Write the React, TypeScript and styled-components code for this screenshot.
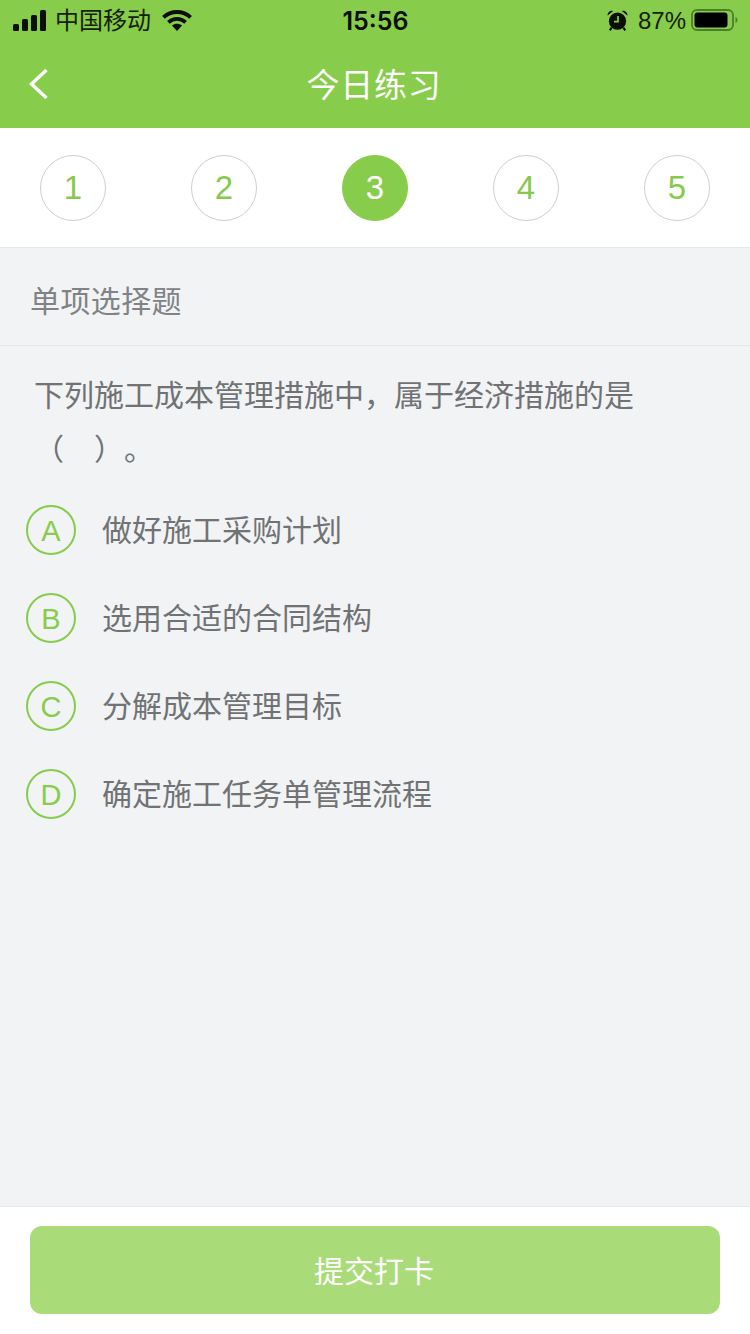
import React from "react";
import styled, { createGlobalStyle } from "styled-components";

const Global = createGlobalStyle`
  html, body { margin: 0; padding: 0; background: #f1f3f5; }
  * { box-sizing: border-box; }
  body { font-family: "Liberation Sans", "Noto Sans CJK SC", sans-serif; text-spacing-trim: space-all; }
`;

const Page = styled.div`
  width: 750px;
  height: 1334px;
  display: flex;
  flex-direction: column;
  background: #f1f3f5;
  overflow: hidden;
`;

const Header = styled.header`
  height: 128px;
  background: #87cc4a;
  display: flex;
  flex-direction: column;
`;

const StatusBar = styled.div`
  height: 40px;
  padding: 0 12px 0 13px;
  display: grid;
  grid-template-columns: 1fr auto 1fr;
  align-items: center;
  color: #0b0f08;
`;

const StatusLeft = styled.div`
  display: flex;
  align-items: center;
`;

const Carrier = styled.span`
  font-size: 24px;
  height: 40px;
  line-height: 42px;
  margin-left: 9px;
  margin-right: 11px;
  color: #16210c;
`;

const Time = styled.span`
  font-family: "Inter", "Liberation Sans", sans-serif;
  font-size: 25px;
  font-weight: 600;
  height: 40px;
  line-height: 42px;
`;

const StatusRight = styled.div`
  display: flex;
  align-items: center;
  justify-content: flex-end;
`;

const Percent = styled.span`
  font-size: 24px;
  height: 40px;
  line-height: 42px;
  margin-left: 10px;
  margin-right: 5px;
  color: #16210c;
`;

const NavBar = styled.div`
  position: relative;
  flex: 1;
  display: flex;
  align-items: center;
  justify-content: center;
  padding-bottom: 3px;
`;

const BackIcon = styled.svg`
  position: absolute;
  left: 28px;
  top: 28px;
`;

const Title = styled.h1`
  margin: 0 2px 0 0;
  font-size: 33px;
  letter-spacing: 0.7px;
  font-weight: 400;
  color: #fff;
`;

const Steps = styled.nav`
  height: 120px;
  background: #fff;
  border-bottom: 1px solid #e6e7e8;
  padding: 27px 40px 0;
  display: flex;
  align-items: flex-start;
  justify-content: space-between;
`;

const Step = styled.div<{ $active?: boolean }>`
  width: 66px;
  height: 66px;
  border-radius: 50%;
  display: flex;
  align-items: center;
  justify-content: center;
  font-size: 33px;
  background: ${(p) => (p.$active ? "#87cc4a" : "#fff")};
  border: 1px solid ${(p) => (p.$active ? "#87cc4a" : "#cfcfcf")};
  color: ${(p) => (p.$active ? "#fff" : "#86c94d")};
`;

const SectionTitle = styled.div`
  height: 98px;
  padding: 5px 0 0 30px;
  border-bottom: 1px solid #e6e7e8;
  display: flex;
  align-items: center;
  font-size: 30px;
  letter-spacing: 0.4px;
  color: #808385;
`;

const Body = styled.main`
  flex: 1;
  min-height: 0;
  display: flex;
  flex-direction: column;
`;

const Question = styled.p`
  margin: 0;
  padding: 23px 0 0 34px;
  max-width: 650px;
  font-size: 30px;
  line-height: 54px;
  color: #707274;
`;

const Options = styled.ul`
  list-style: none;
  margin: 28px 0 0;
  padding: 0 0 0 26px;
  display: flex;
  flex-direction: column;
  gap: 38px;
`;

const Option = styled.li`
  display: flex;
  align-items: center;
  gap: 26px;
  height: 50px;
`;

const Letter = styled.span`
  width: 50px;
  height: 50px;
  border-radius: 50%;
  border: 2px solid #87cc4a;
  padding-top: 2px;
  display: flex;
  align-items: center;
  justify-content: center;
  font-size: 29px;
  color: #87cc4a;
`;

const OptionText = styled.span`
  font-size: 30px;
  padding-bottom: 4px;
  color: #707274;
`;

const Footer = styled.footer`
  height: 128px;
  background: #fff;
  border-top: 1px solid #e6e7ea;
  padding: 19px 30px 20px;
`;

const Submit = styled.button`
  width: 100%;
  height: 88px;
  border: none;
  border-radius: 12px;
  background: #a9dc78;
  color: #fff;
  font-family: inherit;
  font-size: 30px;
  padding: 0 2px 2px 0;
`;

const Svg = styled.svg`
  display: block;
  flex: none;
`;

const Signal = () => (
  <Svg width="33" height="21" viewBox="0 0 33 21" fill="#0b0f08">
    <rect x="0" y="14" width="6" height="7" rx="1.5" />
    <rect x="9" y="9" width="6" height="12" rx="1.5" />
    <rect x="18" y="5" width="6" height="16" rx="1.5" />
    <rect x="27" y="0" width="6" height="21" rx="1.5" />
  </Svg>
);

const Wifi = () => (
  <Svg width="30" height="21" viewBox="0 0 30 21" fill="none" stroke="#0b0f08">
    <path d="M1.4 7.4C9 .2 21 .2 28.6 7.4" strokeWidth="3.8" />
    <path d="M6.4 12.4C11.4 7.6 18.6 7.6 23.6 12.4" strokeWidth="3.8" />
    <path d="M10 15.4 15 21l5-5.6c-2.8-2.2-7.2-2.2-10 0Z" fill="#0b0f08" strokeWidth="0" />
  </Svg>
);

const Alarm = () => (
  <Svg width="21" height="21" viewBox="0 0 21 21">
    <circle cx="10.5" cy="11.2" r="8.6" fill="#0b0f08" />
    <path d="M.6 5.4A4.2 4.2 0 0 1 6.2 1ZM20.4 5.4A4.2 4.2 0 0 0 14.8 1Z" fill="#0b0f08" />
    <path d="M4.6 17.6 2.8 20.4M16.4 17.6 18.2 20.4" stroke="#0b0f08" strokeWidth="2" />
    <path d="M11 6v5.6H7" fill="none" stroke="#87cc4a" strokeWidth="1.7" />
  </Svg>
);

const Battery = () => (
  <Svg width="47" height="22" viewBox="0 0 47 22">
    <rect x="1" y="1" width="41" height="20" rx="5" fill="none" stroke="#4c7f2a" strokeWidth="1.8" />
    <rect x="3.5" y="3.5" width="33" height="15" rx="3" fill="#000" />
    <path d="M44.5 8v6c1.4-.5 2-1.6 2-3s-.6-2.5-2-3Z" fill="#4c7f2a" />
  </Svg>
);

const steps = [1, 2, 3, 4, 5];
const options = [
  ["A", "做好施工采购计划"],
  ["B", "选用合适的合同结构"],
  ["C", "分解成本管理目标"],
  ["D", "确定施工任务单管理流程"],
];

export default function App() {
  return (
    <Page>
      <Global />
      <Header>
        <StatusBar>
          <StatusLeft>
            <Signal />
            <Carrier>中国移动</Carrier>
            <Wifi />
          </StatusLeft>
          <Time>15:56</Time>
          <StatusRight>
            <Alarm />
            <Percent>87%</Percent>
            <Battery />
          </StatusRight>
        </StatusBar>
        <NavBar>
          <BackIcon width="22" height="32" viewBox="0 0 22 32" fill="none" stroke="#fff" strokeWidth="3.4">
            <path d="M18.5 2 3.5 16l15 14" />
          </BackIcon>
          <Title>今日练习</Title>
        </NavBar>
      </Header>
      <Steps>
        {steps.map((n) => (
          <Step key={n} $active={n === 3}>{n}</Step>
        ))}
      </Steps>
      <Body>
        <SectionTitle>单项选择题</SectionTitle>
        <Question>下列施工成本管理措施中，属于经济措施的是（　）。</Question>
        <Options>
          {options.map(([l, t]) => (
            <Option key={l}>
              <Letter>{l}</Letter>
              <OptionText>{t}</OptionText>
            </Option>
          ))}
        </Options>
      </Body>
      <Footer>
        <Submit>提交打卡</Submit>
      </Footer>
    </Page>
  );
}
